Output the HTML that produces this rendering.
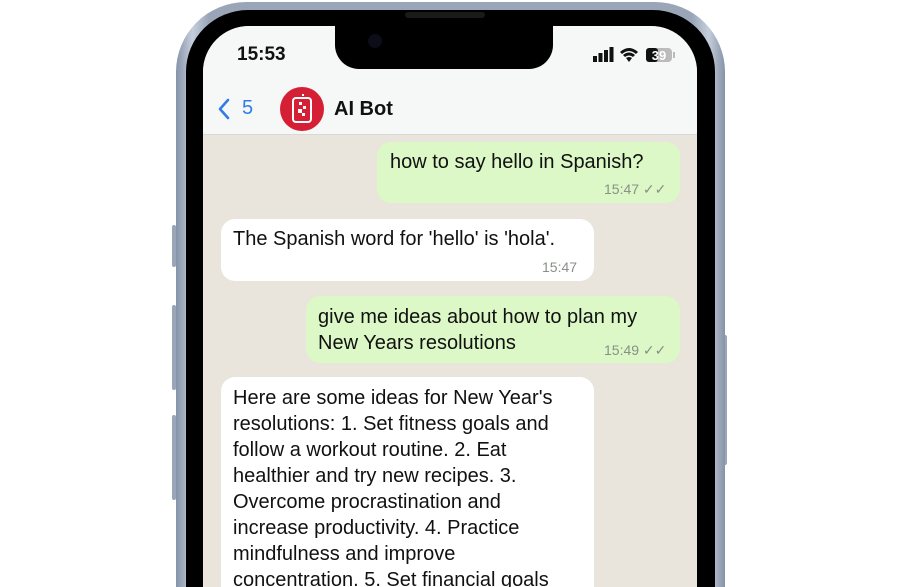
<!DOCTYPE html>
<html><head><meta charset="utf-8"><style>
*{margin:0;padding:0;box-sizing:border-box}
html,body{width:898px;height:587px;overflow:hidden}
body{background:#fff;position:relative;font-family:"Liberation Sans",sans-serif}
#wrap{position:absolute;left:0;top:0;width:898px;height:587px;overflow:hidden}
.frame{position:absolute;left:176px;top:2px;width:549px;height:585px;border-radius:70px 70px 0 0;background:linear-gradient(90deg,#8593a8,#c5cedb 3%,#9aa6b8 6%,#9aa6b8 94%,#c5cedb 97%,#8593a8)}
.bezel{position:absolute;left:186px;top:10px;width:529px;height:577px;border-radius:62px 62px 0 0;background:#000}
.screen{position:absolute;left:203px;top:26px;width:494px;height:561px;border-radius:46px 46px 0 0;background:#e9e4dc;overflow:hidden}
.head{position:absolute;left:0;top:0;width:494px;height:109px;background:#f6f7f7;border-bottom:1px solid #d8d8d8}
.notch{position:absolute;left:335px;top:20px;width:218px;height:49px;background:#000;border-radius:0 0 24px 24px}
.btn{position:absolute;background:#9aa6b8;width:4px;border-radius:2px}
.b{position:absolute;border-radius:14px;font-size:20px;line-height:26px;color:#111;padding:7px 12px;overflow:hidden}
.g{background:#dcf8c6}.w{background:#fff}
.t{position:absolute;font-size:14px;color:#8a8f8a}
</style></head><body><div id="wrap">
<div class="btn" style="left:172px;top:225px;height:42px"></div>
<div class="btn" style="left:172px;top:305px;height:85px"></div>
<div class="btn" style="left:172px;top:415px;height:85px"></div>
<div class="btn" style="left:723px;top:335px;height:130px"></div>
<div class="frame"></div>
<div class="bezel"></div>
<div class="screen">
 <div class="head">
  <div style="position:absolute;left:34px;top:18px;font-size:19px;font-weight:bold;color:#111">15:53</div>
  <svg style="position:absolute;left:390px;top:19px" width="90" height="20">
   <rect x="0" y="11" width="4" height="6" fill="#111"/><rect x="5.5" y="8" width="4" height="9" fill="#111"/><rect x="11" y="5" width="4" height="12" fill="#111"/><rect x="16.5" y="2" width="4" height="15" fill="#111"/>
   <path d="M27 7 Q36 -1 45 7 L43 9 Q36 3 29 9Z M30 10 Q36 5 42 10 L40 12 Q36 9 32 12Z M33 13 L36 17 L39 13 Q36 11 33 13Z" fill="#111"/>
   <rect x="53" y="3" width="26" height="14" rx="4" fill="#bbb"/><rect x="53" y="3" width="12" height="14" rx="3" fill="#111"/><rect x="80" y="7" width="2" height="6" fill="#bbb"/>
   <text x="66" y="15" font-size="13" font-weight="bold" fill="#fff" text-anchor="middle" font-family="Liberation Sans">39</text>
  </svg>
  <svg style="position:absolute;left:14px;top:72px" width="14" height="22"><path d="M11 2 L3 11 L11 20" stroke="#2f7ee6" stroke-width="2.6" fill="none" stroke-linecap="round" stroke-linejoin="round"/></svg>
  <div style="position:absolute;left:39px;top:71px;font-size:20px;color:#2f7ee6">5</div>
  <svg style="position:absolute;left:77px;top:61px" width="44" height="44"><circle cx="22" cy="22" r="22" fill="#d51f35"/>
   <rect x="13" y="11" width="18" height="24" rx="3" stroke="#fff" stroke-width="2" fill="none"/>
   <rect x="19" y="15" width="3" height="3" fill="#fff"/><rect x="23" y="19" width="3" height="3" fill="#fff"/><rect x="18" y="22" width="4" height="4" fill="#fff"/><rect x="22" y="26" width="3" height="3" fill="#fff"/><rect x="22" y="7" width="2" height="2" fill="#fff"/><rect x="20" y="10" width="2" height="2" fill="#fff"/></svg>
  <div style="position:absolute;left:131px;top:72px;font-size:20px;font-weight:bold;color:#111">AI Bot</div>
 </div>
</div>
<div class="notch"></div>
<div style="position:absolute;left:405px;top:12px;width:80px;height:6px;border-radius:3px;background:#1a1a1a"></div>
<div style="position:absolute;left:368px;top:34px;width:14px;height:14px;border-radius:7px;background:#0d0d1a"></div>

<div class="b g" style="left:377px;top:142px;width:303px;height:61px;padding-left:13px">how to say hello in Spanish?</div>
<div class="t" style="left:604px;top:181px">15:47 ✓✓</div>
<div class="b w" style="left:221px;top:219px;width:373px;height:62px">The Spanish word for 'hello' is 'hola'.</div>
<div class="t" style="left:542px;top:259px">15:47</div>
<div class="b g" style="left:306px;top:296px;width:374px;height:67px;padding-top:8px">give me ideas about how to plan my<br>New Years resolutions</div>
<div class="t" style="left:604px;top:342px">15:49 ✓✓</div>
<div class="b w" style="left:221px;top:377px;width:373px;height:210px;padding-top:8px;border-radius:14px 14px 0 0">Here are some ideas for New Year's<br>resolutions: 1. Set fitness goals and<br>follow a workout routine. 2. Eat<br>healthier and try new recipes. 3.<br>Overcome procrastination and<br>increase productivity. 4. Practice<br>mindfulness and improve<br>concentration. 5. Set financial goals</div>
</div></body></html>
